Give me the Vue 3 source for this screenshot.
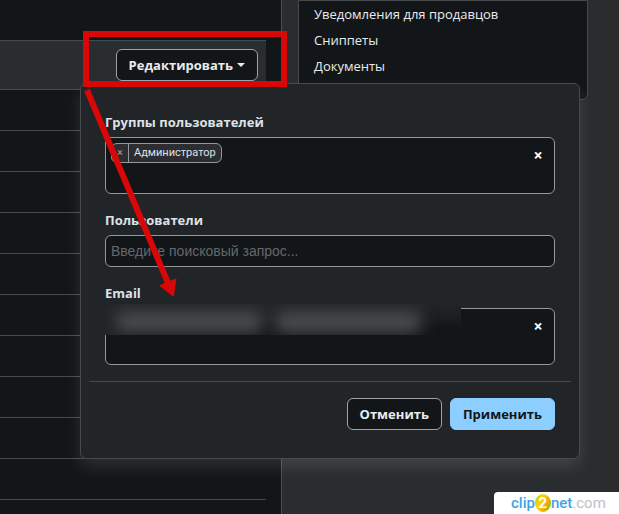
<script setup>
import { ref } from 'vue'

const links = ['Уведомления для продавцов', 'Сниппеты', 'Документы']
const groups = ref(['Администратор'])
const query = ref('')
const removeGroup = (name) => {
  groups.value = groups.value.filter((group) => group !== name)
}
</script>

<template>
  <div class="page">
    <main class="content">
      <table class="grid">
        <thead>
          <tr>
            <th>
              <button type="button" class="btn toggle">Редактировать<span class="caret"></span></button>
            </th>
          </tr>
        </thead>
        <tbody>
          <tr v-for="n in 10" :key="n"><td></td></tr>
        </tbody>
      </table>
    </main>

    <aside class="side">
      <nav class="links">
        <a v-for="link in links" :key="link" href="#">{{ link }}</a>
      </nav>
    </aside>

    <div class="scrollbar"></div>

    <form class="popup" @submit.prevent>
      <div class="field">
        <span id="groups-label" class="label">Группы пользователей</span>
        <div class="box" role="group" aria-labelledby="groups-label">
          <ul class="tags">
            <li v-for="group in groups" :key="group" class="tag">
              <button type="button" class="tag-remove" @click="removeGroup(group)">×</button>
              <span class="tag-text">{{ group }}</span>
            </li>
          </ul>
          <button type="button" class="clear" @click="groups = []">×</button>
        </div>
      </div>

      <div class="field">
        <label class="label" for="users">Пользователи</label>
        <input id="users" v-model="query" class="search" type="text" placeholder="Введите поисковый запрос...">
      </div>

      <div class="field">
        <span id="email-label" class="label">Email</span>
        <div class="box" role="group" aria-labelledby="email-label">
          <div class="smudge"><i class="blob"></i><i class="blob"></i></div>
          <button type="button" class="clear">×</button>
        </div>
      </div>

      <div class="actions">
        <button type="button" class="btn">Отменить</button>
        <button type="submit" class="btn primary">Применить</button>
      </div>
    </form>

    <svg class="marks" width="300" height="310" viewBox="0 0 300 310" aria-hidden="true">
      <rect x="86" y="34" width="198" height="50" fill="none" stroke="#d90707" stroke-width="6" />
      <path d="M87 90 168 283" stroke="#d90707" stroke-width="6" />
      <path d="M159 285.500 176.500 278.300 173.700 297Z" fill="#d90707" />
    </svg>

    <div class="brand">
      <span class="blue">clip</span>
      <span class="ball">2</span>
      <span class="blue">net</span>
      <span class="grey">.com</span>
    </div>
  </div>
</template>

<style>
body {
  margin: 0;
  background: #292d30;
}
</style>

<style scoped>
.page {
  position: relative;
  display: grid;
  grid-template-columns: minmax(0, 1fr) 322px 15px;
  min-height: 100vh;
  overflow: hidden;
  background: #292d30;
  color: #dee2e6;
  font-family: "Open Sans", "Noto Sans", sans-serif;
  font-size: 13px;
  line-height: 20px;
}
.page * {
  box-sizing: border-box;
}
.content {
  padding: 40px 15px 0 0;
  background: #121619;
  border-right: 1px solid #495057;
}
.grid {
  width: 100%;
  border-collapse: separate;
  border-spacing: 0;
}
.grid th {
  height: 50px;
  padding: 8px;
  text-align: right;
  background: #292d30;
  border-top: 1px solid #464a4d;
  border-bottom: 1px solid #464a4d;
}
.grid td {
  height: 41px;
  padding: 0;
  border-bottom: 1px solid #464a4d;
}
.btn {
  height: 32px;
  padding: 0 12px;
  border: 1px solid #a0a3a6;
  border-radius: 6px;
  background: #121619;
  color: #e9ecef;
  font: 700 13px/20px "Open Sans", "Noto Sans", sans-serif;
}
.toggle {
  display: inline-flex;
  align-items: center;
  gap: 4px;
}
.caret {
  border: 4px solid transparent;
  border-top-color: currentColor;
  border-bottom: 0;
}
.side {
  padding: 0 16px;
}
.links {
  display: flex;
  flex-direction: column;
  height: 100px;
  padding: 0 15px;
  background: #121619;
  border: 1px solid #464a4d;
  border-radius: 0 0 6px 6px;
}
.links a {
  color: #e9ecee;
  line-height: 26px;
  text-decoration: none;
}
.scrollbar {
  background: #2c2c2c;
}
.popup {
  position: absolute;
  top: 83px;
  left: 80px;
  width: 500px;
  padding: 28px 8px;
  background: #212528;
  border: 1px solid #464a4d;
  border-radius: 6px;
  box-shadow: 0 8px 16px rgba(255, 255, 255, 0.11);
}
.field {
  display: flex;
  flex-direction: column;
  gap: 5px;
  margin: 0 16px 16px;
}
.label {
  font-weight: 700;
}
.box {
  position: relative;
  display: flex;
  justify-content: space-between;
  align-items: flex-start;
  height: 57px;
  padding: 5px;
  border: 1px solid #95989b;
  border-radius: 6px;
  background: #121619;
}
.tags {
  display: flex;
  margin: 0;
  padding: 0;
  list-style: none;
}
.tag {
  display: flex;
  height: 20px;
  border: 1px solid #95989b;
  border-radius: 6px;
  background: #2b2d31;
  font-family: Roboto, "Open Sans", sans-serif;
  font-size: 11px;
  line-height: 18px;
}
.tag-remove {
  width: 17px;
  padding: 0;
  border: 0;
  border-right: 1px solid #95989b;
  background: none;
  color: #a0a3a6;
  font: inherit;
}
.tag-text {
  padding: 0 5px;
}
.clear {
  width: 22px;
  margin-left: auto;
  padding: 2px 0;
  border: 0;
  background: none;
  color: #fff;
  font: 700 16px/20px "Open Sans", sans-serif;
}
.search {
  width: 100%;
  height: 32px;
  padding: 0 5px;
  border: 1px solid #95989b;
  border-radius: 6px;
  background: #121619;
  color: #dee2e6;
  font: 14px/20px "Liberation Sans", Arial, sans-serif;
}
.search::placeholder {
  color: #65686b;
  opacity: 1;
}
.smudge {
  position: absolute;
  top: -5px;
  left: -10px;
  display: flex;
  gap: 12px;
  width: 365px;
  height: 31px;
  padding: 7px 40px 2px 20px;
  overflow: hidden;
  background: linear-gradient(90deg, #212528 8px, transparent 40px), linear-gradient(#212528, #1b1f22 12px, #121619 24px);
}
.blob {
  flex: 1;
  border-radius: 6px;
  background: #4c4c4f;
  filter: blur(8px);
}
.actions {
  display: flex;
  justify-content: flex-end;
  gap: 8px;
  padding: 16px 16px 0;
  border-top: 1px solid #464a4d;
}
.primary {
  border-color: #8bceff;
  background: #8bceff;
  color: #121619;
}
.marks {
  position: absolute;
  top: 0;
  left: 0;
  pointer-events: none;
}
.brand {
  position: absolute;
  right: 0;
  bottom: 0;
  display: flex;
  align-items: center;
  width: 125px;
  height: 22px;
  padding-left: 17px;
  border-top-left-radius: 4px;
  background: #fff;
  font: 500 15px/20px Roboto, "Liberation Sans", sans-serif;
}
.blue {
  color: #3fa3e4;
}
.ball {
  width: 16px;
  height: 18px;
  border-radius: 50%;
  background: linear-gradient(115deg, #8fcf20, #ffd800 35%, #ffb000 60%, #6abf2a);
  color: #fff;
  font-weight: 700;
  line-height: 18px;
  text-align: center;
}
.grey {
  color: #c0c0c8;
  font-weight: 400;
}
</style>
